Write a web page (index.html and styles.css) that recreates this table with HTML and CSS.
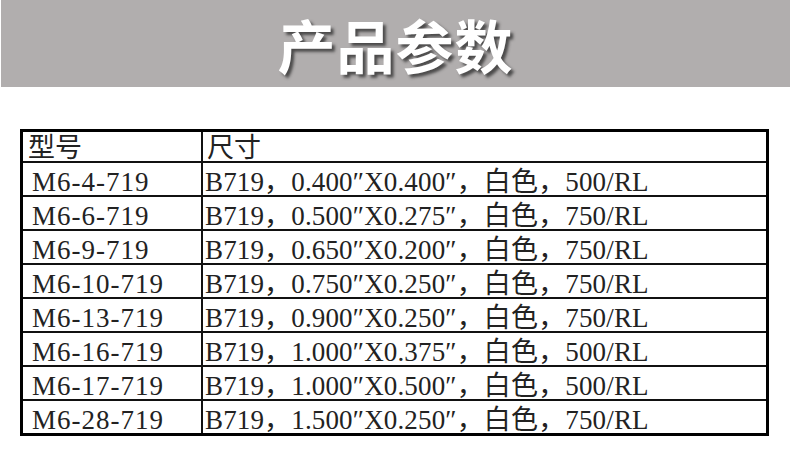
FILE: index.html
```html
<!DOCTYPE html>
<html lang="zh-CN">
<head>
<meta charset="utf-8">
<title>产品参数</title>
<link rel="stylesheet" href="styles.css">
</head>
<body>
<div class="banner"><h1 class="banner-title">产品参数</h1></div>
<table class="spec">
  <thead>
    <tr class="head-row"><th class="c1">型号</th><th class="c2">尺寸</th></tr>
  </thead>
  <tbody>
    <tr><td class="c1">M6-4-719</td><td class="c2">B719，0.400″X0.400″，白色，500/RL</td></tr>
    <tr><td class="c1">M6-6-719</td><td class="c2">B719，0.500″X0.275″，白色，750/RL</td></tr>
    <tr><td class="c1">M6-9-719</td><td class="c2">B719，0.650″X0.200″，白色，750/RL</td></tr>
    <tr><td class="c1">M6-10-719</td><td class="c2">B719，0.750″X0.250″，白色，750/RL</td></tr>
    <tr><td class="c1">M6-13-719</td><td class="c2">B719，0.900″X0.250″，白色，750/RL</td></tr>
    <tr><td class="c1">M6-16-719</td><td class="c2">B719，1.000″X0.375″，白色，500/RL</td></tr>
    <tr><td class="c1">M6-17-719</td><td class="c2">B719，1.000″X0.500″，白色，500/RL</td></tr>
    <tr class="last"><td class="c1">M6-28-719</td><td class="c2">B719，1.500″X0.250″，白色，750/RL</td></tr>
  </tbody>
</table>
</body>
</html>
```
FILE: styles.css
```css
html, body {
  margin: 0;
  padding: 0;
  background: #ffffff;
}
.banner {
  margin-left: 1px;
  height: 87px;
  background: #b1aeae;
  display: flex;
  align-items: center;
  justify-content: center;
}
.banner-title {
  margin: 0;
  padding-top: 0;
  font-family: "Noto Sans CJK SC", sans-serif;
  font-weight: 700;
  font-size: 58px;
  line-height: 60px;
  letter-spacing: 1px;
  color: #ffffff;
  text-shadow: 3px 3px 3px rgba(40, 40, 40, 0.75);
}
.spec {
  margin: 42px 0 0 20px;
  width: 749px;
  border: 3px solid #000;
  border-collapse: separate;
  border-spacing: 0;
  color: #222222;
  table-layout: fixed;
}
.spec th, .spec td {
  padding: 0;
  text-align: left;
  font-family: "Liberation Serif", "Times New Roman", "Noto Sans CJK SC", serif;
  font-size: 27px;
  font-weight: 400;
  white-space: nowrap;
  border-bottom: 2px solid #111;
  box-sizing: border-box;
}
.spec .c1 {
  width: 180px;
  border-right: 2px solid #111;
}
.spec th {
  height: 31px;
  line-height: 26px;
  padding-top: 3px;
  vertical-align: top;
}
.spec th.c1 { padding-left: 5px; }
.spec th.c2 { padding-left: 4px; }
.spec td {
  height: 34px;
  line-height: 26px;
  padding-top: 6px;
  vertical-align: top;
}
.spec td.c1 { padding-left: 9px; letter-spacing: 1px; }
.spec td.c2 { padding-left: 2px; letter-spacing: 0.15px; }
.spec tr.last td {
  border-bottom: none;
  height: 32px;
}
```
